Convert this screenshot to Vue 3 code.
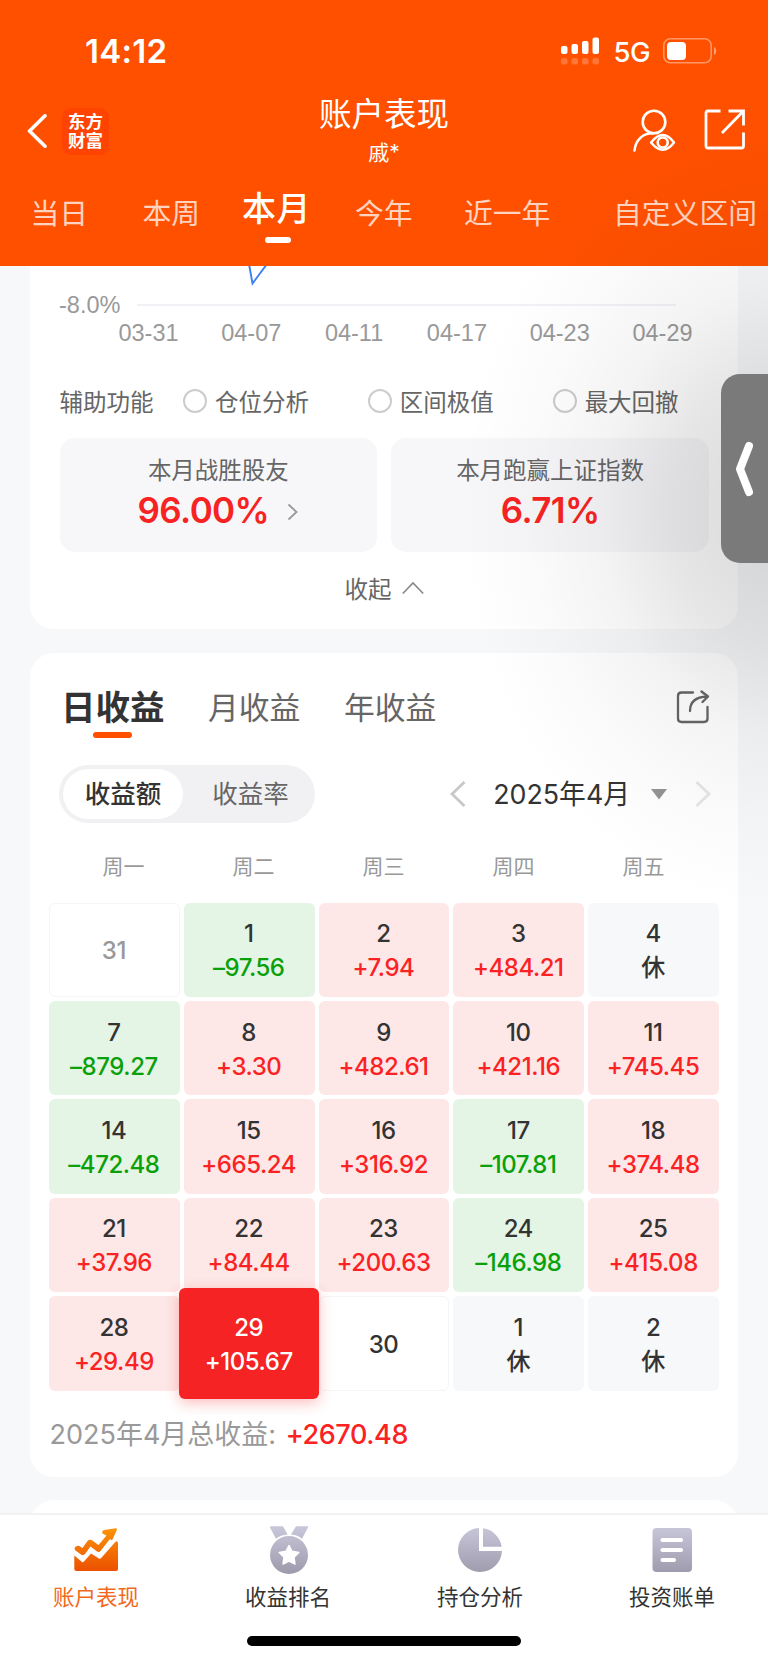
<script setup>
import { reactive } from "vue";

const state = reactive({
	range: "本月",
	profit: "日收益",
	mode: "收益额",
	selected: "29",
	nav: "账户表现",
});

const ranges = ["当日", "本周", "本月", "今年", "近一年", "自定义区间"];
const dates = ["03-31", "04-07", "04-11", "04-17", "04-23", "04-29"];
const helpers = ["仓位分析", "区间极值", "最大回撤"];
const profits = ["日收益", "月收益", "年收益"];
const modes = ["收益额", "收益率"];
const weekdays = ["周一", "周二", "周三", "周四", "周五"];
const navs = ["账户表现", "收益排名", "持仓分析", "投资账单"];

const days = [
	{ day: "31", type: "outside" },
	{ day: "1", value: "–97.56", type: "down" },
	{ day: "2", value: "+7.94", type: "up" },
	{ day: "3", value: "+484.21", type: "up" },
	{ day: "4", value: "休", type: "rest" },
	{ day: "7", value: "–879.27", type: "down" },
	{ day: "8", value: "+3.30", type: "up" },
	{ day: "9", value: "+482.61", type: "up" },
	{ day: "10", value: "+421.16", type: "up" },
	{ day: "11", value: "+745.45", type: "up" },
	{ day: "14", value: "–472.48", type: "down" },
	{ day: "15", value: "+665.24", type: "up" },
	{ day: "16", value: "+316.92", type: "up" },
	{ day: "17", value: "–107.81", type: "down" },
	{ day: "18", value: "+374.48", type: "up" },
	{ day: "21", value: "+37.96", type: "up" },
	{ day: "22", value: "+84.44", type: "up" },
	{ day: "23", value: "+200.63", type: "up" },
	{ day: "24", value: "–146.98", type: "down" },
	{ day: "25", value: "+415.08", type: "up" },
	{ day: "28", value: "+29.49", type: "up" },
	{ day: "29", value: "+105.67", type: "up" },
	{ day: "30", type: "empty" },
	{ day: "1", value: "休", type: "rest" },
	{ day: "2", value: "休", type: "rest" },
];
</script>

<template>
	<div class="page">
		<header class="header">
			<div class="status">
				<span class="time">14:12</span>
				<svg class="signal" width="40" height="28" viewBox="0 0 40 28" fill="#fff">
					<rect x="0" y="9" width="6.5" height="8" rx="2" />
					<rect x="10.5" y="7" width="6.5" height="10" rx="2" />
					<rect x="21" y="4" width="6.5" height="13" rx="2" />
					<rect x="31.5" y="0.5" width="6.5" height="16.5" rx="2" />
					<g opacity="0.22">
						<rect x="0" y="21" width="6.5" height="6.5" rx="2" />
						<rect x="10.5" y="21" width="6.5" height="6.5" rx="2" />
						<rect x="21" y="21" width="6.5" height="6.5" rx="2" />
						<rect x="31.5" y="21" width="6.5" height="6.5" rx="2" />
					</g>
				</svg>
				<span class="network">5G</span>
				<svg class="battery" width="55" height="26" viewBox="0 0 55 26">
					<rect x="0.8" y="0.8" width="47.4" height="24" rx="6.5" fill="none" stroke="#fff" stroke-opacity="0.4" stroke-width="1.6" />
					<rect x="4" y="4" width="19" height="18" rx="4" fill="#fff" />
					<path d="M51 9v8c3-1.500 3-6.500 0-8z" fill="#fff" opacity="0.45" />
				</svg>
			</div>
			<div class="navbar">
				<div class="nav-left">
					<svg width="20" height="34" viewBox="0 0 20 34">
						<path d="M18 1.800L2.500 17L18 32.200" fill="none" stroke="#fff" stroke-width="3.600" stroke-linecap="round" stroke-linejoin="round" />
					</svg>
					<div class="logo">东方<br />财富</div>
				</div>
				<div class="titles">
					<h1>账户表现</h1>
					<p>戚*</p>
				</div>
				<div class="nav-right">
					<svg width="44" height="44" viewBox="0 0 44 44" fill="none" stroke="#fff" stroke-width="2.600" stroke-linecap="round">
						<circle cx="22" cy="13" r="11.300" />
						<path d="M2.500 41.500C3.500 31 11 24 21 24.300" />
						<path d="M19 33.500Q31 18.500 42 33.500Q31 48 19 33.500Z" stroke-linejoin="round" stroke-width="2.400" />
						<circle cx="30.700" cy="33.500" r="5" />
					</svg>
					<svg width="42" height="42" viewBox="0 0 42 42" fill="none" stroke="#fff" stroke-width="2.800">
						<path d="M16.500 2H4Q2 2 2 4V37Q2 39 4 39H37.500Q39.500 39 39.500 37V23.500" />
						<path d="M24.500 2H39.500V16.500M39 2.500L18 24" />
					</svg>
				</div>
			</div>
			<nav class="ranges">
				<span
					v-for="item in ranges"
					:key="item"
					:class="{ active: item === state.range }"
					@click="state.range = item"
				>{{ item }}</span>
			</nav>
		</header>

		<main class="content">
			<section class="card overview">
				<svg class="chart" width="708" height="90" viewBox="0 0 708 90">
					<path d="M107 39H646" stroke="#ebeef2" stroke-width="1.500" />
					<path d="M219 -2L222.500 17.500L237 -2" fill="none" stroke="#3b7fee" stroke-width="1.900" />
					<text x="29" y="46.500">-8.0%</text>
					<text
						v-for="(date, i) in dates"
						:key="date"
						:x="118.500 + i * 102.800"
						y="74.500"
						text-anchor="middle"
					>{{ date }}</text>
				</svg>
				<div class="helpers">
					<span class="helpers-title">辅助功能</span>
					<label v-for="item in helpers" :key="item"><i />{{ item }}</label>
				</div>
				<div class="stats">
					<div class="stat">
						<p>本月战胜股友</p>
						<div class="stat-value">
							<strong>96.00%</strong>
							<svg width="12" height="18" viewBox="0 0 12 18">
								<path d="M1.500 1.500L9.500 9L1.500 16.500" fill="none" stroke="#999" stroke-width="1.800" />
							</svg>
						</div>
					</div>
					<div class="stat">
						<p>本月跑赢上证指数</p>
						<div class="stat-value"><strong>6.71%</strong></div>
					</div>
				</div>
				<div class="collapse">
					收起
					<svg width="22" height="14" viewBox="0 0 22 14">
						<path d="M0.800 12.500L11 2L21.200 12.500" fill="none" stroke="#8a8a8a" stroke-width="1.700" />
					</svg>
				</div>
			</section>

			<section class="card calendar">
				<div class="profit-tabs">
					<span
						v-for="item in profits"
						:key="item"
						:class="{ active: item === state.profit }"
						@click="state.profit = item"
					>{{ item }}</span>
					<svg class="share" width="34" height="34" viewBox="0 0 34 34" fill="none" stroke="#666" stroke-width="2.300" stroke-linecap="round" stroke-linejoin="round">
						<path d="M17 2.500H5.500Q2 2.500 2 6V28.500Q2 32 5.500 32H28Q31.500 32 31.500 28.500V17" />
						<path d="M14 21C14 12 19 7 31 6.500M25.500 1.500L32 6.500L26.500 12" />
					</svg>
				</div>
				<div class="toolbar">
					<div class="toggle">
						<span
							v-for="item in modes"
							:key="item"
							:class="{ active: item === state.mode }"
							@click="state.mode = item"
						>{{ item }}</span>
					</div>
					<div class="month">
						<svg width="16" height="28" viewBox="0 0 16 28">
							<path d="M14.500 2L2 14L14.500 26" fill="none" stroke="#c8c8c8" stroke-width="2.800" />
						</svg>
						<span>2025年4月</span>
						<svg class="triangle" width="16" height="11" viewBox="0 0 16 11">
							<path d="M0 0H16L8 10.500Z" fill="#949494" />
						</svg>
						<svg width="16" height="28" viewBox="0 0 16 28">
							<path d="M1.500 2L14 14L1.500 26" fill="none" stroke="#e6e6e6" stroke-width="2.800" />
						</svg>
					</div>
				</div>
				<div class="weekdays">
					<span v-for="item in weekdays" :key="item">{{ item }}</span>
				</div>
				<div class="grid">
					<div
						v-for="(item, i) in days"
						:key="i"
						class="cell"
						:class="[item.type, { selected: item.day === state.selected }]"
					>
						<span>{{ item.day }}</span>
						<span v-if="item.value" class="value">{{ item.value }}</span>
					</div>
				</div>
				<div class="total">2025年4月总收益: <strong>+2670.48</strong></div>
			</section>

			<section class="card next" />
		</main>

		<footer class="tabbar">
			<svg width="0" height="0" class="defs">
				<defs>
					<linearGradient id="orange" gradientUnits="userSpaceOnUse" x1="0" y1="4" x2="0" y2="47">
						<stop offset="0" stop-color="#fb9408" />
						<stop offset="1" stop-color="#ec5000" />
					</linearGradient>
					<linearGradient id="grey" gradientUnits="userSpaceOnUse" x1="0" y1="2" x2="0" y2="50">
						<stop offset="0" stop-color="#c9c7da" />
						<stop offset="1" stop-color="#9c9aab" />
					</linearGradient>
				</defs>
			</svg>
			<div class="nav-items">
				<div
					v-for="(item, i) in navs"
					:key="item"
					class="nav-item"
					:class="{ active: item === state.nav }"
					@click="state.nav = item"
				>
					<svg v-if="i === 0" width="52" height="52" viewBox="0 0 52 52" fill="url(#orange)">
						<path d="M4.300 31.500L12 38Q13 38.800 14 37.500L21 29.500L29 34.500Q30.200 35.200 31.200 34L45.500 17.800Q48 16.300 48 19V45Q48 47 46 47H6.300Q4.300 47 4.300 45Z" />
						<path d="M4.800 23.500Q7.500 20.500 11 23L12.500 24L17.500 17Q20 14.500 23 17L28.500 21L36.500 11.500L32.500 9.500Q31.500 7 34 6L46 4.200Q47.500 4.300 46.800 6L42.500 15.500Q41.500 17 40 15L30.500 27Q29 28.700 27 27.500L20.500 22.500L15 30Q13 32 11 30.500L5.500 26.500Q4 25 4.800 23.500Z" />
					</svg>
					<svg v-else-if="i === 1" class="medal" width="52" height="52" viewBox="0 0 52 52" fill="url(#grey)">
						<path d="M7.500 2.300H20L24.600 10.500C19.500 10.700 16 12.300 13 14.800L7 3.500ZM33 2.300H45V3.500L39 14.800C36 12.300 32.500 10.700 28 10.500Z" />
						<circle cx="26" cy="31" r="19" />
						<path d="M26 21.500L29 27.300L35.800 28.500L31 33.300L32 40L26 37L20 40L21 33.300L16.200 28.500L23 27.300Z" fill="#fff" stroke="#fff" stroke-width="1.500" stroke-linejoin="round" />
					</svg>
					<svg v-else-if="i === 2" width="52" height="52" viewBox="0 0 52 52" fill="url(#grey)">
						<path d="M25 4V27H48A22 22 0 1 1 25 4Z" />
						<path d="M29 4.300V22.700H47.700A22 22 0 0 0 29 4.300Z" />
					</svg>
					<svg v-else width="52" height="52" viewBox="0 0 52 52">
						<rect x="6.500" y="4" width="39.500" height="44" rx="4" fill="url(#grey)" />
						<path d="M16.500 16H35M16.500 26H35M16.500 36H28" stroke="#fff" stroke-width="4.200" stroke-linecap="round" />
					</svg>
					<span>{{ item }}</span>
				</div>
			</div>
			<div class="home-bar" />
		</footer>

		<div class="shade" />
		<div class="handle">
			<svg width="22" height="58" viewBox="0 0 22 58">
				<path d="M15 6L6 29L15 52" fill="none" stroke="#fff" stroke-width="8" stroke-linecap="round" stroke-linejoin="round" />
			</svg>
		</div>
	</div>
</template>

<style>
body {
	margin: 0;
	background: #f6f8fa;
}
</style>

<style scoped>
.page {
	position: relative;
	display: flex;
	flex-direction: column;
	width: 768px;
	height: 1663px;
	overflow: hidden;
	background: #f6f8fa;
	color: #333;
	font-family: Inter, "Noto Sans CJK SC", sans-serif;
}

.page * {
	box-sizing: border-box;
}

svg {
	display: block;
	flex: none;
}

h1,
p {
	margin: 0;
	font-weight: 400;
}

.header {
	height: 266px;
	flex: none;
	background: #ff5000;
	color: #fff;
}

.status {
	display: flex;
	align-items: center;
	height: 92px;
	padding: 10px 50px 0 85px;
}

.time {
	flex: 1;
	font-size: 33px;
	font-weight: 600;
	letter-spacing: 0.3px;
}

.network {
	margin: 2px 13px 0 12px;
	font-size: 27.5px;
	font-weight: 500;
	letter-spacing: -0.5px;
}

.navbar {
	display: grid;
	grid-template-columns: 1fr auto 1fr;
	height: 86px;
}

.nav-left {
	display: flex;
	align-items: center;
	gap: 15px;
	padding: 0 0 8px 27px;
}

.logo {
	width: 47px;
	height: 47px;
	padding-top: 4px;
	border-radius: 9px;
	background: #ff4300;
	font-size: 17.5px;
	font-weight: 700;
	line-height: 19px;
	text-align: center;
}

.titles {
	text-align: center;
}

.titles h1 {
	margin-top: 3px;
	font-size: 32.5px;
	line-height: 40px;
}

.titles p {
	margin-top: 3px;
	font-size: 21px;
	line-height: 30px;
}

.nav-right {
	display: flex;
	justify-content: flex-end;
	gap: 28px;
	padding: 17px 22.5px 0 0;
}

.ranges {
	display: grid;
	grid-template-columns: 112px 99.5px 113px 109px 149px 146px;
	height: 88px;
	padding: 16px 0 0 30.5px;
	font-size: 28.8px;
	line-height: 40px;
	white-space: nowrap;
}

.ranges span {
	color: rgba(255, 255, 255, 0.75);
}

.ranges .active {
	margin-top: -5px;
	color: #fff;
	font-size: 34px;
	font-weight: 500;
	letter-spacing: 0.5px;
}

.ranges .active::after {
	content: "";
	display: block;
	width: 26px;
	height: 6px;
	margin: 8px 0 0 23px;
	border-radius: 3px;
	background: #fff;
}

.content {
	flex: 1;
	min-height: 0;
	overflow: hidden;
	padding: 0 30px;
}

.card {
	background: #fff;
	border-radius: 24px;
}

.overview {
	height: 363px;
	border-radius: 0 0 24px 24px;
}

.chart text {
	fill: #999;
	font-family: "Liberation Sans", Arial, sans-serif;
	font-size: 23.5px;
}

.helpers {
	display: flex;
	align-items: center;
	height: 82px;
	padding: 8px 0 0 29.5px;
	color: #666;
	font-size: 23.5px;
}

.helpers-title {
	width: 124px;
}

.helpers label {
	display: flex;
	align-items: center;
	gap: 7.5px;
	width: 185px;
}

.helpers i {
	width: 24px;
	height: 24px;
	border: 2px solid #ccc;
	border-radius: 50%;
}

.stats {
	display: grid;
	grid-template-columns: 1fr 1fr;
	gap: 14px;
	padding: 0 29px 0 29.5px;
}

.stat {
	height: 114px;
	padding-top: 16px;
	border-radius: 15px;
	background: #f7f7fa;
	color: #666;
	font-size: 23.5px;
	line-height: 34px;
	text-align: center;
}

.stat-value {
	display: flex;
	align-items: center;
	justify-content: center;
	gap: 18px;
	height: 43px;
}

.stat-value strong {
	color: #f72323;
	font-size: 35px;
	font-weight: 600;
	letter-spacing: -0.6px;
}

.stat-value svg {
	margin-top: 5px;
}

.collapse {
	display: flex;
	align-items: center;
	justify-content: center;
	gap: 10px;
	height: 72px;
	color: #666;
	font-size: 23.5px;
}

.collapse svg {
	margin-top: -1px;
}

.calendar {
	height: 824px;
	margin-top: 24px;
}

.profit-tabs {
	display: flex;
	align-items: center;
	height: 112px;
	padding: 0 28px 8px 31px;
	color: #666;
	font-size: 30.8px;
}

.profit-tabs span {
	position: relative;
	margin-right: 43.5px;
}

.profit-tabs .active {
	color: #333;
	font-size: 34.5px;
	font-weight: 600;
}

.profit-tabs .active::after {
	content: "";
	position: absolute;
	left: 32px;
	bottom: -8px;
	width: 39px;
	height: 6px;
	border-radius: 3px;
	background: #ff5000;
}

.share {
	margin: 3px 0 0 auto;
}

.toolbar {
	display: flex;
	align-items: center;
	justify-content: space-between;
	padding: 0 27px 0 29px;
}

.toggle {
	display: flex;
	width: 256px;
	height: 58px;
	padding: 4px;
	border-radius: 29px;
	background: #f1f1f4;
	color: #666;
	font-size: 25.5px;
	line-height: 50px;
	text-align: center;
}

.toggle span {
	flex: 1;
	padding-left: 7px;
}

.toggle .active {
	flex: none;
	width: 120px;
	padding: 0;
	border-radius: 25px;
	background: #fff;
	color: #333;
	font-weight: 500;
}

.month {
	display: flex;
	align-items: center;
	font-size: 26.8px;
}

.month span {
	margin: -3px 0 0 27px;
}

.triangle {
	margin: 0 28px 0 21px;
}

.weekdays {
	display: grid;
	grid-template-columns: repeat(5, 130px);
	height: 79.6px;
	padding: 6px 0 0 28.5px;
	color: #999;
	font-size: 21px;
	line-height: 76px;
	text-align: center;
}

.grid {
	display: grid;
	grid-template-columns: repeat(5, 1fr);
	grid-auto-rows: 94.4px;
	gap: 4px;
	padding: 0 19px;
}

.cell {
	display: flex;
	flex-direction: column;
	align-items: center;
	justify-content: center;
	padding: 3px 1px 0 0;
	border-radius: 6px;
	font-size: 24px;
	font-weight: 500;
	line-height: 34px;
	letter-spacing: -0.45px;
}

.up {
	background: #fde7e7;
}

.up .value {
	color: #fa2222;
}

.down {
	background: #e4f4e5;
}

.down .value {
	color: #09a009;
}

.rest {
	background: #f6f8fa;
}

.outside,
.empty {
	border: 1.5px solid #f5f5f7;
	background: #fff;
}

.outside {
	color: #999;
}

.selected {
	z-index: 1;
	margin: -8px -4.500px;
	background: #f52323;
	box-shadow: 0 4px 14px rgba(245, 35, 35, 0.3);
	color: #fff;
}

.selected .value {
	color: #fff;
}

.total {
	padding: 1px 0 0 19.5px;
	color: #999;
	font-size: 27px;
	line-height: 86px;
}

.total strong {
	margin-left: 2px;
	color: #fa2222;
	font-weight: 500;
	letter-spacing: -0.4px;
}

.next {
	height: 60px;
	margin-top: 23px;
}

.tabbar {
	height: 150px;
	flex: none;
	border-top: 2px solid #f0f2f3;
	background: #fff;
}

.defs {
	position: absolute;
}

.nav-items {
	display: grid;
	grid-template-columns: repeat(4, 1fr);
	height: 121px;
}

.nav-item {
	display: flex;
	flex-direction: column;
	align-items: center;
	padding-top: 9px;
	font-size: 21.5px;
	line-height: 40px;
}

.nav-item span {
	margin-top: 1px;
}

.nav-item .medal {
	margin-left: 2px;
}

.nav-item.active {
	color: #f2681c;
}

.home-bar {
	width: 274px;
	height: 10px;
	margin: 0 auto;
	border-radius: 5px;
	background: #000;
}

/* soft shadow that spreads out from the side handle */
.shade {
	position: absolute;
	top: 110px;
	right: 0;
	width: 320px;
	height: 800px;
	background: radial-gradient(
		320px 400px at 332px 400px,
		rgba(0, 0, 0, 0.15) 0%,
		rgba(0, 0, 0, 0.13) 15%,
		rgba(0, 0, 0, 0.1) 33%,
		rgba(0, 0, 0, 0.045) 57%,
		rgba(0, 0, 0, 0.015) 80%,
		transparent 100%
	);
	pointer-events: none;
}

.handle {
	position: absolute;
	top: 374px;
	right: 0;
	display: flex;
	align-items: center;
	width: 47.5px;
	height: 189px;
	padding-left: 13px;
	border-radius: 19px 0 0 19px;
	background: #7a7a7a;
}
</style>
